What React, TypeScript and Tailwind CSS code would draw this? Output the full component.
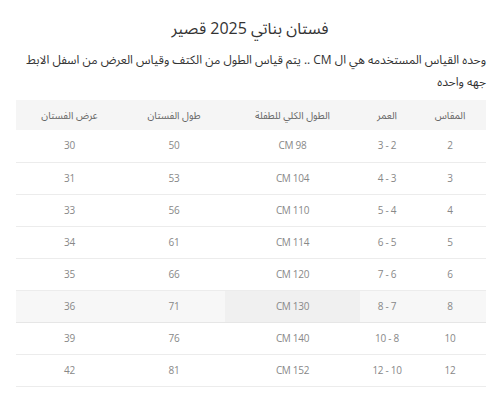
import React from 'react'

const rows = [
  ['2', '3 - 2', 'CM 98', '50', '30'],
  ['3', '4 - 3', 'CM 104', '53', '31'],
  ['4', '5 - 4', 'CM 110', '56', '33'],
  ['5', '6 - 5', 'CM 114', '61', '34'],
  ['6', '7 - 6', 'CM 120', '66', '35'],
  ['8', '8 - 7', 'CM 130', '71', '36'],
  ['10', '10 - 8', 'CM 140', '76', '39'],
  ['12', '12 - 10', 'CM 152', '81', '42'],
]

const headers = ['المقاس', 'العمر', 'الطول الكلي للطفلة', 'طول الفستان', 'عرض الفستان']
const widths = ['w-[72px]', 'w-[54px]', 'w-[135px]', 'w-[102px]', 'w-[107px]']

export default function App() {
  return (
    <div dir="rtl" className="w-[500px] h-[402px] bg-white px-[14px] pt-[14px] overflow-hidden font-['Open_Sans','Noto_Sans_Arabic',sans-serif]">
      {/* Title */}
      <h1 className="text-center text-[16px] leading-[28px] text-[#333]">فستان بناتي 2025 قصير</h1>

      {/* Description */}
      <p className="mt-[7px] text-[12px] leading-[22px] text-[#333]">
        وحده القياس المستخدمه هي ال CM .. يتم قياس الطول من الكتف وقياس العرض من اسفل الابط جهه واحده
      </p>

      {/* Size table */}
      <table className="mt-[7px] w-[470px] border-collapse table-fixed">
        <thead>
          <tr className="bg-[#f5f5f5] h-[30px]">
            {headers.map((h, i) => (
              <th key={h} className={`${widths[i]} font-normal text-[10px] text-[#666] text-center`}>{h}</th>
            ))}
          </tr>
        </thead>
        <tbody>
          {rows.map((r, ri) => {
            const hl = ri === 5
            return (
              <tr key={ri} className={`h-[32px] border-b ${hl ? 'bg-[#f7f7f7] border-[#e6e6e6]' : 'border-[#ececec]'}`}>
                {r.map((c, ci) => (
                  <td
                    key={ci}
                    dir="ltr"
                    className={`text-center text-[10px] text-[#888] tracking-[-0.3px] ${hl && ci === 2 ? 'bg-[#f0f0f0]' : ''}`}
                  >
                    {c}
                  </td>
                ))}
              </tr>
            )
          })}
        </tbody>
      </table>
    </div>
  )
}
